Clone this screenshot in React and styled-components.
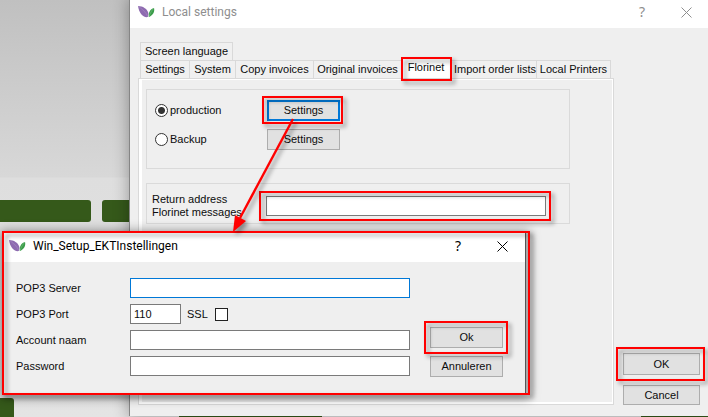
import React from "react";
import styled, { createGlobalStyle, css } from "styled-components";

const GlobalStyle = createGlobalStyle`
  *, *::before, *::after { box-sizing: border-box; }
  body {
    margin: 0;
    font: 11px/13px "Liberation Sans", Arial, sans-serif;
    color: #0c0c0c;
  }
  button, input { font: inherit; color: inherit; }
`;

const Desktop = styled.div`
  position: relative;
  min-height: 100vh;
  overflow: hidden;
  background: linear-gradient(#c0c0c0 0, #d8d8d8 177px, #dedede 178px, #e4e4e4 100%);
`;

const Tile = styled.div`
  position: absolute;
  left: ${(p) => p.$left}px;
  top: ${(p) => p.$top}px;
  width: ${(p) => p.$width}px;
  height: ${(p) => p.$height}px;
  border-radius: 3px;
  background: #35591a;
`;

const MainWindow = styled.section`
  position: relative;
  display: flex;
  flex-direction: column;
  min-height: calc(100vh - 1px);
  margin: 0 0 1px 130px;
  background: #efefef;
  box-shadow: -1px 0 0 #858585, 0 0 14px 2px rgba(0, 0, 0, 0.3);
`;

const TitleBar = styled.header`
  display: flex;
  align-items: center;
  height: ${(p) => p.$height}px;
  padding: ${(p) => p.$padding};
  background: #fff;
  color: ${(p) => p.$color};
`;

const Title = styled.h1`
  flex: 1;
  margin: 0 0 0 7px;
  font: 400 12px/16px Roboto, "Noto Sans", sans-serif;
`;

const CaptionButton = styled.button`
  display: grid;
  place-items: center;
  width: 44px;
  height: 24px;
  padding: 0;
  border: 0;
  background: none;
  font: 400 14px/16px "Noto Sans", sans-serif;
`;

const WindowBody = styled.div`
  flex: 1;
  display: flex;
  gap: 9px;
  padding: 14px 8px 11px;
`;

const TabArea = styled.div`
  flex: 1;
  min-width: 0;
  display: flex;
  flex-direction: column;
`;

const TabRow = styled.div`
  display: grid;
  grid-template-columns: ${(p) => p.$columns};
  height: 18px;
  padding: 0 3px 0 2px;
`;

const Tab = styled.button`
  position: relative;
  padding: 0;
  border: 1px solid #d9d9d9;
  border-width: 1px 1px 0 0;
  background: #f0f0f0;
  white-space: nowrap;
  &:first-child { border-left-width: 1px; }
  [aria-selected="true"] + & { padding-left: 3px; }
  ${(p) =>
    p.$active &&
    css`
      height: 20px;
      margin-top: -2px;
      padding-bottom: 2px;
      background: #fff;
    `}
`;

const Panel = styled.div`
  flex: 1;
  display: flex;
  flex-direction: column;
  gap: 14px;
  padding: 10px 43px 9px 5px;
  border: 1px solid #d9d9d9;
  box-shadow: inset 3px 1px 0 #fff, inset -1px -2px 0 #fff;
`;

const Group = styled.div`
  border: 1px solid #dadada;
  margin-left: 2px;
`;

const AccountGroup = styled(Group)`
  display: grid;
  gap: 8px;
  padding: 10px 8px 18px;
`;

const AccountRow = styled.div`
  display: grid;
  grid-template-columns: 112px 73px;
`;

const RadioLabel = styled.label`
  display: flex;
  align-items: center;
  gap: 2px;
`;

const Radio = styled.input`
  appearance: none;
  width: 13px;
  height: 13px;
  margin: 0;
  border: 1px solid #333;
  border-radius: 50%;
  background: #fff;
  &:checked {
    background: radial-gradient(circle, #333 0 3px, #fff 4px);
  }
`;

const ReturnGroup = styled(Group)`
  display: grid;
  grid-template-columns: 114px 280px;
  align-items: center;
  height: 41px;
  padding: 4px 0 0 5px;
`;

const Marked = styled.span`
  position: relative;
  display: grid;
`;

const Marker = styled.span`
  position: absolute;
  z-index: 2;
  inset: ${(p) => p.$inset};
  border: 2px solid #f00;
  filter: drop-shadow(3px 3px 2px rgba(0, 0, 0, 0.4));
  pointer-events: none;
`;

const PushButton = styled.button`
  height: ${(p) => p.$height ?? 21}px;
  padding: 0;
  border: 1px solid #adadad;
  background: #e1e1e1;
  ${(p) => p.$focused && "border: 2px solid #0078d7;"}
`;

const TextInput = styled.input`
  width: ${(p) => p.$width ?? "100%"};
  min-width: 0;
  height: 20px;
  padding: 0 3px;
  border: 1px solid ${(p) => (p.$focused ? "#0078d7" : "#7a7a7a")};
  border-radius: 0;
  background: #fff;
  outline: none;
`;

const SideActions = styled.div`
  width: 77px;
  display: flex;
  flex-direction: column;
  justify-content: flex-end;
  gap: 10px;
`;

const Dialog = styled.section`
  position: absolute;
  z-index: 3;
  left: 2px;
  top: 232px;
  width: 524px;
  background: #efefef;
  border-right: 1px solid #555;
  box-shadow: 1px 2px 10px 3px rgba(0, 0, 0, 0.4);
`;

const DialogBody = styled.form`
  display: flex;
  gap: 20px;
  padding: 16px 22px 16px 14px;
`;

const Fields = styled.div`
  flex: 1;
  display: grid;
  align-content: start;
  gap: 6px;
`;

const Field = styled.div`
  display: grid;
  grid-template-columns: 114px 1fr;
  align-items: center;
`;

const PortLine = styled.div`
  display: flex;
  align-items: center;
  gap: 6px;
`;

const CheckLabel = styled.label`
  display: flex;
  align-items: center;
  gap: 7px;
`;

const CheckBox = styled.input`
  appearance: none;
  width: 13px;
  height: 13px;
  margin: 0;
  border: 1px solid #222;
  background: #fff;
`;

const DialogActions = styled.div`
  width: 73px;
  display: flex;
  flex-direction: column;
  gap: 8px;
  padding-top: 49px;
`;

const Arrow = styled.svg`
  position: absolute;
  z-index: 4;
  left: 226px;
  top: 112px;
  filter: drop-shadow(3px 3px 2px rgba(0, 0, 0, 0.4));
  pointer-events: none;
`;

function Leaves() {
  return (
    <svg width="17" height="12" viewBox="0 0 17 12" aria-hidden="true">
      <path d="M0 0C5 0 9 3 10 6c1 2 0 4 0 5C5 12 1 7 0 0Z" fill="#8e6bb0" />
      <path d="M0 0C4 3 8 6 10 11" stroke="#a88cc4" strokeWidth=".6" fill="none" />
      <path d="M16 2c1 4-1 7-5 9-1-4 1-8 5-9Z" fill="#3a9c49" />
      <path d="M16 2c-2 2-4 5-5 9" stroke="#7cc184" strokeWidth=".6" fill="none" />
    </svg>
  );
}

function Cross() {
  return (
    <svg width="11" height="11" viewBox="0 0 11 11" aria-hidden="true">
      <path d="M.5.5l10 10M10.5.5l-10 10" stroke="currentColor" />
    </svg>
  );
}

const tabs = [
  "Settings",
  "System",
  "Copy invoices",
  "Original invoices",
  "Florinet",
  "Import order lists",
  "Local Printers",
];

export default function App() {
  return (
    <>
      <GlobalStyle />
      <Desktop>
        <Tile $left={-4} $top={200} $width={95} $height={22} />
        <Tile $left={102} $top={200} $width={60} $height={22} />
        <Tile $left={-4} $top={398} $width={18} $height={30} />
        <Tile $left={179} $top={398} $width={143} $height={30} />
        <Tile $left={641} $top={398} $width={90} $height={30} />
        <MainWindow>
          <TitleBar $height={28} $padding="0 0 4px 8px" $color="#8e8e8e">
            <Leaves />
            <Title>Local settings</Title>
            <CaptionButton aria-label="Help">?</CaptionButton>
            <CaptionButton aria-label="Close"><Cross /></CaptionButton>
          </TitleBar>
          <WindowBody>
            <TabArea>
              <TabRow $columns="93px">
                <Tab>Screen language</Tab>
              </TabRow>
              <TabRow role="tablist" $columns="50fr 46fr 78fr 88fr 49fr 86fr 74fr">
                {tabs.map((name) => {
                  const active = name === "Florinet";
                  return (
                    <Tab key={name} role="tab" aria-selected={active} $active={active}>
                      {name}
                      {active && <Marker $inset="-2px -2px -3px -1px" />}
                    </Tab>
                  );
                })}
              </TabRow>
              <Panel>
                <AccountGroup>
                  <AccountRow>
                    <RadioLabel>
                      <Radio type="radio" name="account" defaultChecked />
                      production
                    </RadioLabel>
                    <Marked>
                      <PushButton $focused>Settings</PushButton>
                      <Marker $inset="-4px -3px -3px -5px" />
                    </Marked>
                  </AccountRow>
                  <AccountRow>
                    <RadioLabel>
                      <Radio type="radio" name="account" />
                      Backup
                    </RadioLabel>
                    <PushButton>Settings</PushButton>
                  </AccountRow>
                </AccountGroup>
                <ReturnGroup>
                  <label htmlFor="return">Return address<br />Florinet messages</label>
                  <Marked>
                    <TextInput id="return" />
                    <Marker $inset="-5px -5px -5px -7px" />
                  </Marked>
                </ReturnGroup>
              </Panel>
            </TabArea>
            <SideActions>
              <Marked>
                <PushButton $height={22}>OK</PushButton>
                <Marker $inset="-6px -5px -6px -7px" />
              </Marked>
              <PushButton $height={20}>Cancel</PushButton>
            </SideActions>
          </WindowBody>
        </MainWindow>
        <Dialog role="dialog" aria-labelledby="dialog-title">
          <TitleBar $height={30} $padding="0 1px 2px 7px" $color="#000">
            <Leaves />
            <Title id="dialog-title">Win_Setup_EKTInstellingen</Title>
            <CaptionButton aria-label="Help">?</CaptionButton>
            <CaptionButton aria-label="Close"><Cross /></CaptionButton>
          </TitleBar>
          <DialogBody onSubmit={(e) => e.preventDefault()}>
            <Fields>
              <Field>
                <label htmlFor="server">POP3 Server</label>
                <TextInput id="server" $focused />
              </Field>
              <Field>
                <label htmlFor="port">POP3 Port</label>
                <PortLine>
                  <TextInput id="port" $width="51px" defaultValue="110" />
                  <CheckLabel>SSL <CheckBox type="checkbox" /></CheckLabel>
                </PortLine>
              </Field>
              <Field>
                <label htmlFor="account">Account naam</label>
                <TextInput id="account" />
              </Field>
              <Field>
                <label htmlFor="password">Password</label>
                <TextInput id="password" type="password" />
              </Field>
            </Fields>
            <DialogActions>
              <Marked>
                <PushButton>Ok</PushButton>
                <Marker $inset="-6px -5px -6px -6px" />
              </Marked>
              <PushButton type="button">Annuleren</PushButton>
            </DialogActions>
          </DialogBody>
          <Marker $inset="-1px -5px -2px 0" />
        </Dialog>
        <Arrow width="76" height="126" viewBox="0 0 76 126" aria-hidden="true">
          <path d="M67 7L14 106" stroke="#f00" strokeWidth="2.4" />
          <path d="M7 120L9 103L20 109Z" fill="#f00" />
        </Arrow>
      </Desktop>
    </>
  );
}
